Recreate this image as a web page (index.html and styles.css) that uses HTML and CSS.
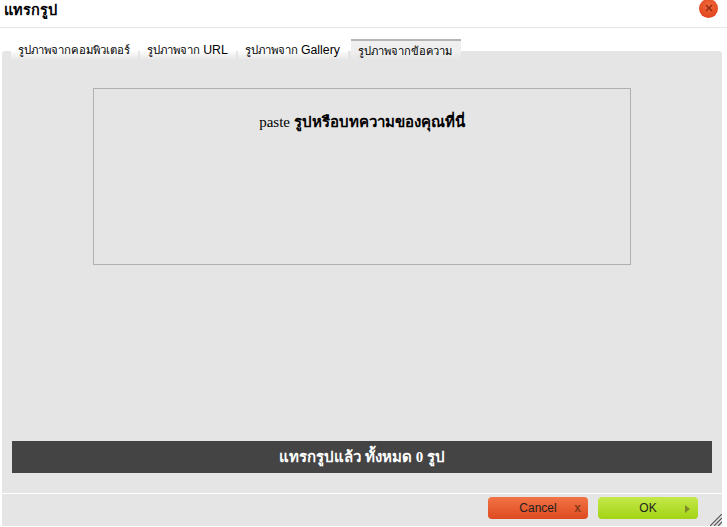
FILE: index.html
```html
<!DOCTYPE html>
<html lang="th">
<head>
<meta charset="utf-8">
<title>แทรกรูป</title>
<link rel="stylesheet" href="styles.css">
</head>
<body>
<div class="dialog">
  <header class="head">
    <h1 class="title">แทรกรูป</h1>
    <button class="close" aria-label="close"><svg width="8" height="8" viewBox="0 0 8 8"><path d="M1 1l6 6M7 1l-6 6" stroke="#8a2a12" stroke-width="1.4"/></svg></button>
  </header>
  <nav class="tabs">
    <span class="tab">รูปภาพจากคอมพิวเตอร์</span>
    <span class="tab">รูปภาพจาก <span class="lat">URL</span></span>
    <span class="tab">รูปภาพจาก <span class="lat">Gallery</span></span>
    <span class="tab active">รูปภาพจากข้อความ</span>
  </nav>
  <main class="panel">
    <div class="content">
      <div class="paste">paste <b>รูปหรือบทความของคุณที่นี่</b></div>
      <div class="status">แทรกรูปแล้ว ทั้งหมด 0 รูป</div>
    </div>
    <footer class="foot">
      <button class="btn cancel">Cancel<span class="mark">x</span></button>
      <button class="btn ok">OK<svg class="arrow" width="5" height="8" viewBox="0 0 5 8"><path d="M0 0l5 4-5 4z" fill="#7f8a2a"/></svg></button>
      <svg class="grip" width="12" height="12" viewBox="0 0 12 12"><path d="M0 12L12 0M4 12l8-8M8 12l4-4" stroke="#555" stroke-width="1.2"/></svg>
    </footer>
  </main>
</div>
</body>
</html>
```
FILE: styles.css
```css
html, body { margin: 0; height: 100%; background: #fff; }
body { overflow: hidden; font-family: "Liberation Sans", "Noto Sans", sans-serif; color: #000; }
.dialog { width: 727px; height: 527px; display: flex; flex-direction: column; position: relative; }
.head { height: 22px; border-bottom: 1px solid #e6e6e6; display: flex; align-items: center; justify-content: space-between; padding: 0 9px 5px 4px; }
.title { margin: -2px 0 0; font-size: 14.5px; font-weight: bold; line-height: 22px; font-family: "Liberation Sans", "Noto Sans", sans-serif; }
.close { width: 19px; height: 19px; border: 0; padding: 0; border-radius: 50%; background: radial-gradient(circle at 50% 35%, #f2693a, #dd3a17); display: flex; align-items: center; justify-content: center; margin-top: -6px; }
.tabs { display: flex; height: 22px; margin: 11px 0 0 11px; position: relative; z-index: 1; }
.tab { font-size: 11.35px; line-height: 23px; height: 21px; padding: 0 8px 0 7px; margin-right: 2px; background: linear-gradient(#fff 55%, #e5e5e5); white-space: nowrap; }
.lat { font-size: 12.3px; }
.tab.active { font-size: 11.15px; background: linear-gradient(#efefef 55%, #e5e5e5); border-top: 2px solid #b5b5b5; height: 19px; line-height: 21px; padding: 0 9px 0 7px; margin-left: 1px; margin-right: 0; }
.panel { flex: 1; margin: -10px 5px 1px 2px; background: #e5e5e5; display: flex; flex-direction: column; border-radius: 3px 3px 0 0; }
.content { flex: 1; padding: 37px 10px 20px 10px; display: flex; flex-direction: column; justify-content: space-between; border-bottom: 1px solid #fff; }
.paste { width: 536px; margin-left: 81px; border: 1px solid #b0b0b0; font-family: "Liberation Serif", "Noto Sans", serif; font-size: 15px; text-align: center; padding-top: 21px; height: 154px; line-height: 24px; }
.status { height: 32px; width: 700px; background: #444; color: #fff; font-family: "Liberation Serif", "Noto Sans", serif; font-weight: bold; font-size: 15px; line-height: 32px; text-align: center; }
.foot { height: 32px; display: flex; justify-content: flex-end; gap: 10px; padding: 3px 24px 0 0; box-sizing: border-box; position: relative; }
.btn { width: 100px; height: 22px; border: 0; border-radius: 4px; font-family: "Liberation Sans", sans-serif; font-size: 12px; color: #222; position: relative; padding: 0; }
.cancel { background: linear-gradient(#f27345, #de4a1f); }
.ok { background: linear-gradient(#c4e84a, #a3d414); }
.mark { position: absolute; right: 7px; top: 4px; color: #8a3a1a; font-weight: bold; }
.arrow { position: absolute; right: 8px; top: 8px; }
.grip { position: absolute; right: 0; bottom: 0; }
```
